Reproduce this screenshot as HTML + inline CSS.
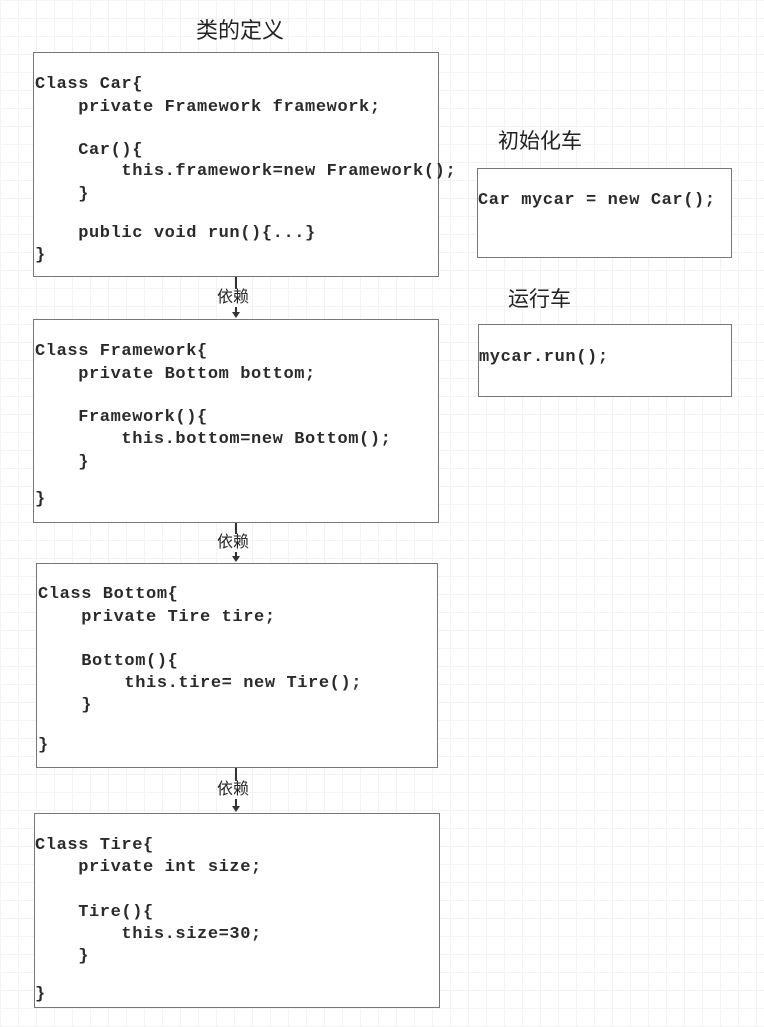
<!DOCTYPE html>
<html><head><meta charset="utf-8"><style>
body{margin:0;width:764px;height:1027px;position:relative;background:#fff;overflow:hidden;
background-image:linear-gradient(#f3f3f3 1px,transparent 1px),linear-gradient(90deg,#f3f3f3 1px,transparent 1px);background-size:18px 18px;}
.b{position:absolute;border:1.5px solid #777;background:#fff;box-sizing:border-box}
.t{position:absolute;font-family:"Liberation Mono",monospace;font-size:17px;letter-spacing:0.6px;font-weight:bold;color:#2a2a2a;white-space:pre;line-height:20px}
.h{position:absolute;font-family:"Liberation Sans","Noto Sans CJK SC",sans-serif;color:#222;white-space:nowrap;line-height:1}
.v{position:absolute;width:1.5px;background:#333;left:235px}
.a{position:absolute;left:232px;width:0;height:0;border-left:4px solid transparent;border-right:4px solid transparent;border-top:6px solid #333}
.dep{position:absolute;left:217px;font-family:"Liberation Sans","Noto Sans CJK SC",sans-serif;font-size:16px;color:#222;background:#fff;line-height:18px}
</style></head><body>
<div class="h" style="left:196px;top:20px;font-size:22px">类的定义</div>
<div class="h" style="left:498px;top:131px;font-size:21px">初始化车</div>
<div class="h" style="left:508px;top:289px;font-size:21px">运行车</div>

<div class="b" style="left:33px;top:52px;width:406px;height:225px"></div>
<div class="b" style="left:33px;top:319px;width:406px;height:204px"></div>
<div class="b" style="left:36px;top:563px;width:402px;height:205px"></div>
<div class="b" style="left:34px;top:813px;width:406px;height:195px"></div>
<div class="b" style="left:477px;top:168px;width:255px;height:90px"></div>
<div class="b" style="left:478px;top:324px;width:254px;height:73px"></div>

<div class="v" style="top:277px;height:36px"></div><div class="a" style="top:312px"></div>
<div class="dep" style="top:289px">依赖</div>
<div class="v" style="top:523px;height:34px"></div><div class="a" style="top:556px"></div>
<div class="dep" style="top:534px">依赖</div>
<div class="v" style="top:768px;height:39px"></div><div class="a" style="top:806px"></div>
<div class="dep" style="top:781px">依赖</div>

<div class="t" style="left:35px;top:75px">Class Car{</div>
<div class="t" style="left:35px;top:98px">    private Framework framework;</div>
<div class="t" style="left:35px;top:141px">    Car(){</div>
<div class="t" style="left:35px;top:162px">        this.framework=new Framework();</div>
<div class="t" style="left:35px;top:185px">    }</div>
<div class="t" style="left:35px;top:224px">    public void run(){...}</div>
<div class="t" style="left:35px;top:246px">}</div>

<div class="t" style="left:35px;top:342px">Class Framework{</div>
<div class="t" style="left:35px;top:365px">    private Bottom bottom;</div>
<div class="t" style="left:35px;top:408px">    Framework(){</div>
<div class="t" style="left:35px;top:430px">        this.bottom=new Bottom();</div>
<div class="t" style="left:35px;top:453px">    }</div>
<div class="t" style="left:35px;top:490px">}</div>

<div class="t" style="left:38px;top:585px">Class Bottom{</div>
<div class="t" style="left:38px;top:608px">    private Tire tire;</div>
<div class="t" style="left:38px;top:652px">    Bottom(){</div>
<div class="t" style="left:38px;top:674px">        this.tire= new Tire();</div>
<div class="t" style="left:38px;top:696px">    }</div>
<div class="t" style="left:38px;top:736px">}</div>

<div class="t" style="left:35px;top:836px">Class Tire{</div>
<div class="t" style="left:35px;top:858px">    private int size;</div>
<div class="t" style="left:35px;top:903px">    Tire(){</div>
<div class="t" style="left:35px;top:925px">        this.size=30;</div>
<div class="t" style="left:35px;top:947px">    }</div>
<div class="t" style="left:35px;top:985px">}</div>

<div class="t" style="left:478px;top:191px">Car mycar = new Car();</div>
<div class="t" style="left:479px;top:348px">mycar.run();</div>
</body></html>
